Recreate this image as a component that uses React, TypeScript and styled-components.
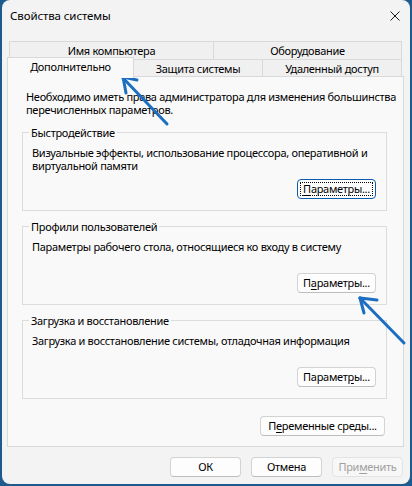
import { createGlobalStyle, styled } from 'styled-components'

const GlobalStyle = createGlobalStyle`
  html, body {
    margin: 0;
    padding: 0;
  }
  body {
    background: #1e5a8e;
    font-family: 'Noto Sans', 'Open Sans', sans-serif;
    font-size: 11px;
    letter-spacing: -0.3px;
    color: #000;
  }
`

/* ----------------------
   Window frame
---------------------- */

const Screen = styled.div`
  position: relative;
  width: 412px;
  height: 486px;
  padding-left: 2px;
  box-sizing: border-box;
  overflow: hidden;
`

const Window = styled.div`
  width: 408px;
  height: 484px;
  background: #f3f3f3;
  border-radius: 8px;
  display: flex;
  flex-direction: column;
  overflow: hidden;
`

const TitleBar = styled.div`
  height: 32px;
  flex-shrink: 0;
  display: flex;
  align-items: center;
  justify-content: space-between;
  padding: 0 10px 0 8px;
`

const Title = styled.span`
  font-size: 11.5px;
  line-height: 16px;
  letter-spacing: -0.1px;
`

const Body = styled.div`
  display: flex;
  flex-direction: column;
  padding: 9px 6px 0 5px;
`

/* ----------------------
   Tabs
---------------------- */

const TabRow = styled.div<{ $height: number; $inset: number }>`
  display: flex;
  height: ${({ $height }) => $height}px;
  padding: 0 2px 0 ${({ $inset }) => $inset}px;
`

const Tab = styled.div<{ $width?: number; $active?: boolean }>`
  box-sizing: border-box;
  display: flex;
  align-items: center;
  justify-content: center;
  white-space: nowrap;
  line-height: 14px;
  border: 1px solid #d9d9d9;
  border-bottom: none;
  background: ${({ $active }) => ($active ? '#f9f9f9' : '#f0f0f0')};
  height: ${({ $active }) => ($active ? 21 : 18)}px;
  width: ${({ $width }) => ($width ? `${$width}px` : 'auto')};
  flex: ${({ $width }) => ($width ? '0 0 auto' : '1 1 auto')};
  margin-left: ${({ $active }) => ($active ? 0 : -1)}px;
  margin-top: ${({ $active }) => ($active ? -2 : 0)}px;
  padding-bottom: ${({ $active }) => ($active ? 3 : 0)}px;
  position: ${({ $active }) => ($active ? 'relative' : 'static')};
  z-index: ${({ $active }) => ($active ? 1 : 'auto')};

  &:first-child {
    margin-left: 0;
  }
`

const Panel = styled.div`
  box-sizing: border-box;
  height: 371px;
  display: flex;
  flex-direction: column;
  border: 1px solid #d9d9d9;
  background: #f9f9f9;
  padding: 13px 16px 0 14px;
`

const Intro = styled.p`
  margin: 0 0 10px 4px;
  line-height: 13px;
  white-space: nowrap;
`

/* ----------------------
   Group boxes
---------------------- */

const Group = styled.fieldset`
  margin: 0 0 9px;
  min-width: 0;
  padding: 7px 10px 11px 9px;
  border: 1px solid #dcdcdc;
`

const Legend = styled.legend`
  margin-left: -3px;
  padding: 0 2px;
  line-height: 13px;
`

const GroupText = styled.div`
  min-height: 26px;
  line-height: 13px;
  white-space: nowrap;
`

const ButtonRow = styled.div<{ $top: number; $right?: number }>`
  display: flex;
  justify-content: flex-end;
  margin-top: ${({ $top }) => $top}px;
  padding-right: ${({ $right }) => $right ?? 0}px;
`

const Button = styled.button<{ $width: number; $focused?: boolean }>`
  box-sizing: border-box;
  width: ${({ $width }) => $width}px;
  height: 20px;
  padding: 0;
  font-family: inherit;
  font-size: 11px;
  letter-spacing: inherit;
  line-height: 14px;
  white-space: nowrap;
  color: #000;
  background: #fdfdfd;
  border: 1px solid ${({ $focused }) => ($focused ? '#0b5cad' : '#d3d3d3')};
  border-bottom-color: ${({ $focused }) => ($focused ? '#0b5cad' : '#bdbdbd')};
  border-radius: 4px;
  outline: ${({ $focused }) => ($focused ? '1px dotted #000' : 'none')};
  outline-offset: -4px;

  &:disabled {
    color: #a0a0a0;
    background: #f7f7f7;
    border-color: #e3e3e3;
  }
`

const Key = styled.u`
  text-decoration: underline;
  text-underline-offset: 2px;
`

const Footer = styled.div`
  display: flex;
  justify-content: flex-end;
  gap: 10px;
  padding: 10px 1px 0 0;
`

/* ----------------------
   Annotation arrows
---------------------- */

const Overlay = styled.svg`
  position: absolute;
  left: 0;
  top: 0;
  pointer-events: none;
`

const CloseIcon = () => (
  <svg width='10' height='10' viewBox='0 0 10 10'>
    <path d='M0.5 0.5 L9.5 9.5 M9.5 0.5 L0.5 9.5' stroke='#1b1b1b' strokeWidth='1' fill='none' />
  </svg>
)

const Arrows = () => (
  <Overlay width='412' height='486' viewBox='0 0 412 486'>
    <g stroke='#1b6ec2' strokeLinecap='round' strokeLinejoin='round' fill='none'>
      <path d='M167 124 L123 78' strokeWidth='3' />
      <path d='M123 77 L137 80' strokeWidth='3' />
      <path d='M123 77 L126 93' strokeWidth='3' />
      <path d='M404 343 L360 298' strokeWidth='3' />
      <path d='M360 298 L377 300' strokeWidth='3' />
      <path d='M360 298 L364 313' strokeWidth='3' />
    </g>
  </Overlay>
)

export default function App() {
  return (
    <Screen>
      <GlobalStyle />
      <Window>
        <TitleBar>
          <Title>Свойства системы</Title>
          <CloseIcon />
        </TitleBar>

        <Body>
          <TabRow $height={18} $inset={2}>
            <Tab $width={205}>Имя компьютера</Tab>
            <Tab>Оборудование</Tab>
          </TabRow>
          <TabRow $height={17} $inset={0}>
            <Tab $width={127} $active>
              Дополнительно
            </Tab>
            <Tab $width={130}>Защита системы</Tab>
            <Tab>Удаленный доступ</Tab>
          </TabRow>

          <Panel>
            <Intro>
              Необходимо иметь права администратора для изменения большинства
              <br />
              перечисленных параметров.
            </Intro>

            <Group>
              <Legend>Быстродействие</Legend>
              <GroupText>
                Визуальные эффекты, использование процессора, оперативной и
                <br />
                виртуальной памяти
              </GroupText>
              <ButtonRow $top={7}>
                <Button $width={79} $focused>
                  <Key>П</Key>араметры...
                </Button>
              </ButtonRow>
            </Group>

            <Group>
              <Legend>Профили пользователей</Legend>
              <GroupText>Параметры рабочего стола, относящиеся ко входу в систему</GroupText>
              <ButtonRow $top={7}>
                <Button $width={79}>
                  П<Key>а</Key>раметры...
                </Button>
              </ButtonRow>
            </Group>

            <Group>
              <Legend>Загрузка и восстановление</Legend>
              <GroupText>Загрузка и восстановление системы, отладочная информация</GroupText>
              <ButtonRow $top={7}>
                <Button $width={79}>
                  Парамет<Key>р</Key>ы...
                </Button>
              </ButtonRow>
            </Group>

            <ButtonRow $top={8} $right={2}>
              <Button $width={125}>
                П<Key>е</Key>ременные среды...
              </Button>
            </ButtonRow>
          </Panel>

          <Footer>
            <Button $width={71}>ОК</Button>
            <Button $width={71}>Отмена</Button>
            <Button $width={71} disabled>
              При<Key>м</Key>енить
            </Button>
          </Footer>
        </Body>
      </Window>
      <Arrows />
    </Screen>
  )
}
